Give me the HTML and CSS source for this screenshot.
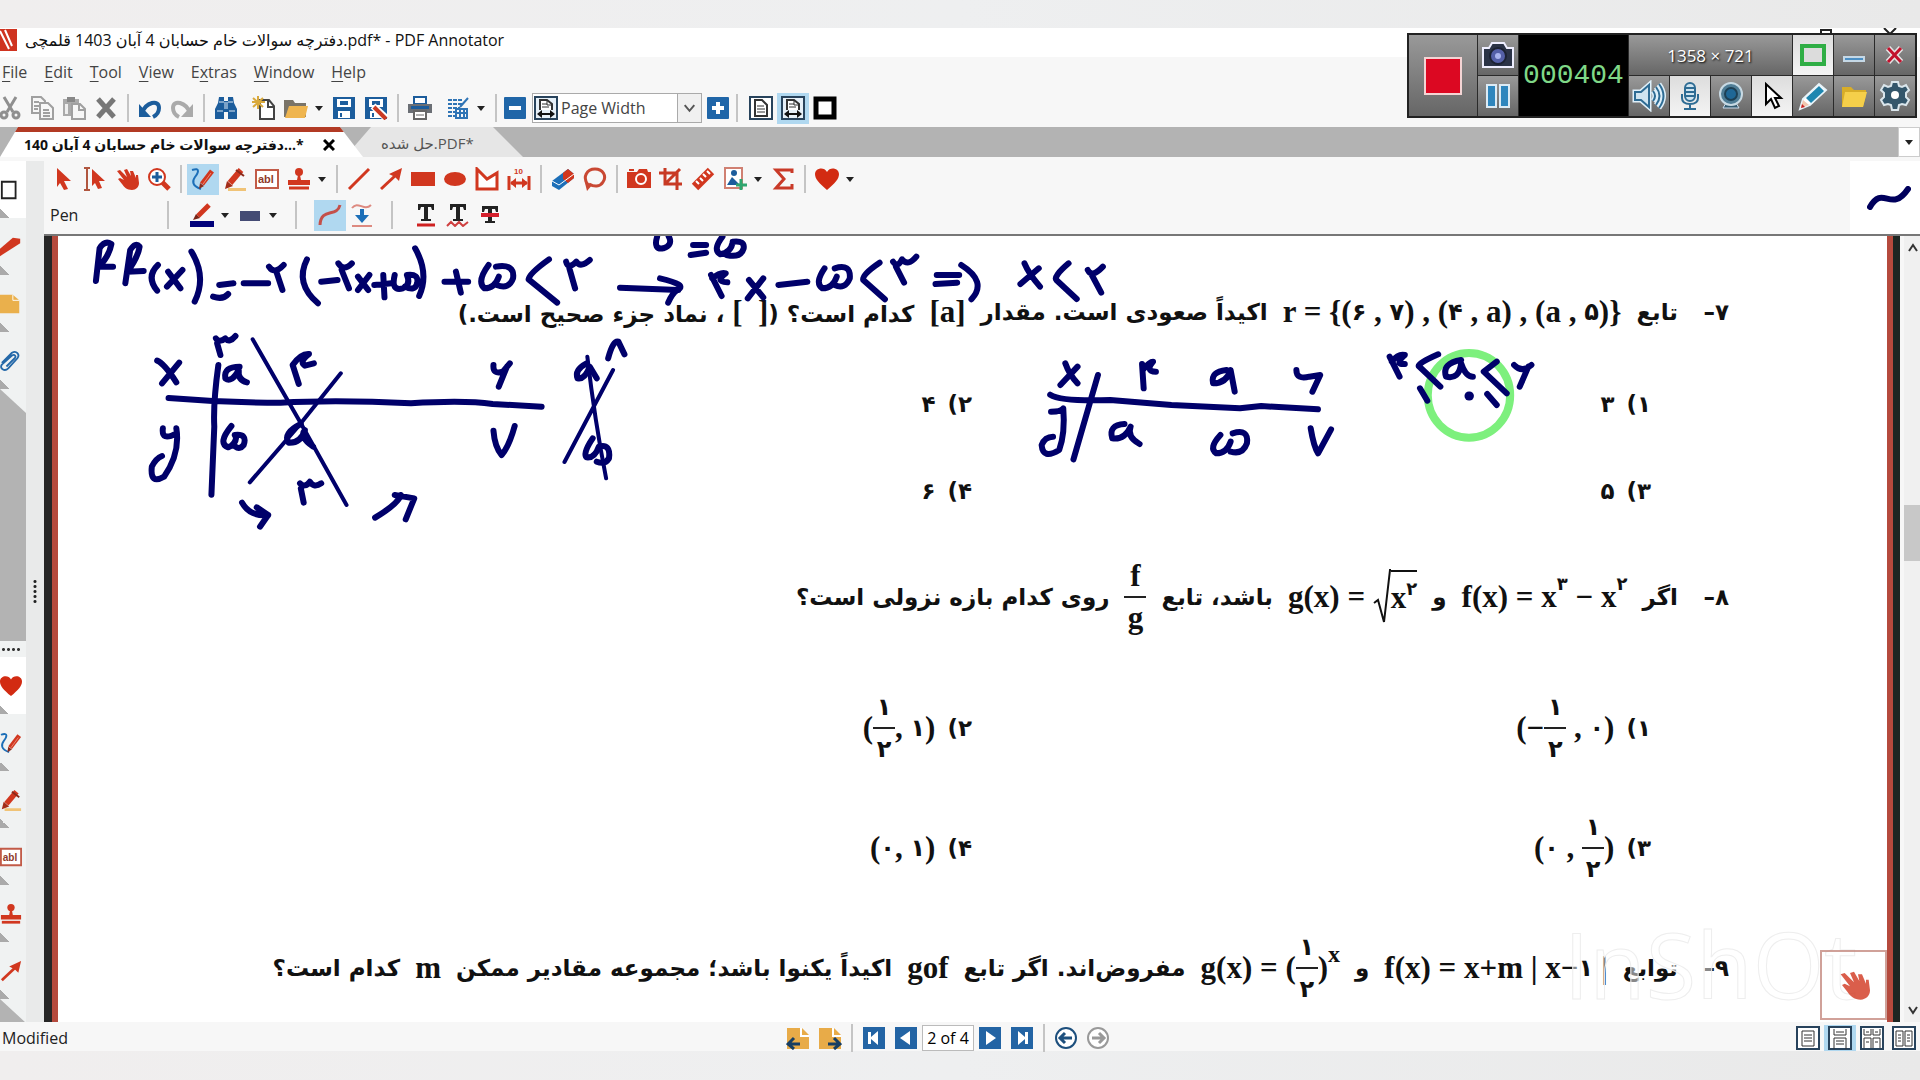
FILE: index.html
```html
<!DOCTYPE html>
<html lang="en">
<head>
    <meta charset="UTF-8">
    <meta name="viewport" content="width=device-width, initial-scale=1.0">
    <title>PDF Annotator</title>
    <link rel="stylesheet" href="styles.css">
</head>
<body>

    <!-- Icon sprite -->
    <svg class="sprite" aria-hidden="true">
        <symbol id="cut" viewBox="0 0 24 24"><g fill="none" stroke="#8f8f8f" stroke-width="3"><path d="M6 1l9 15M18 1L9 16"/><circle cx="6" cy="19" r="3"/><circle cx="18" cy="19" r="3"/></g></symbol>
        <symbol id="copy" viewBox="0 0 24 24"><g fill="#f7f7f7" stroke="#a0a0a0" stroke-width="2"><path d="M2 1h9l4 4v12H2z"/><path d="M10 7h8l5 5v11H10z"/><path d="M4 6h5M4 10h5M4 13h4M13 14h6M13 17h7M13 20h7"/></g></symbol>
        <symbol id="paste" viewBox="0 0 24 24"><path d="M1 3h16v17H1z" fill="#aaa"/><path d="M5 1h8v5H5z" fill="#888"/><path d="M3 8h3v10H3z" fill="#eee"/><path d="M10 8h8l5 5v10H10z" fill="#f7f7f7" stroke="#a0a0a0" stroke-width="2"/><path d="M17 8v6h6" fill="none" stroke="#a0a0a0" stroke-width="2"/></symbol>
        <symbol id="delete" viewBox="0 0 24 24"><path d="M4 3l16 18M20 3L4 21" stroke="#777" stroke-width="5"/></symbol>
        <symbol id="undo" viewBox="0 0 24 24"><path d="M4 17C8 6 21 3 21 12c0 4-2 7-6 9" fill="none" stroke="#1c5d9c" stroke-width="4"/><path d="M1 8v13h12z" fill="#1c5d9c"/></symbol>
        <symbol id="redo" viewBox="0 0 24 24"><path d="M20 17C16 6 3 3 3 12c0 4 2 7 6 9" fill="none" stroke="#aaa" stroke-width="4"/><path d="M23 8v13H11z" fill="#aaa"/></symbol>
        <symbol id="find" viewBox="0 0 24 24"><path d="M5 1h5v4h4V1h5l1 6 3 6v10h-9v-7h-4v7H1V13l3-6z" fill="#1c5d9c"/><path d="M11 6v7M13 6v7M3 15h6M15 15h6M5 6h5M14 6h5" stroke="#dbe9f5"/></symbol>
        <symbol id="new" viewBox="0 0 24 24"><path d="M8 4h9l5 6v13H8z" fill="#fff" stroke="#444" stroke-width="2"/><path d="M16 4v7h6" fill="none" stroke="#444" stroke-width="2"/><path d="M6 0v13M0 6h13M1 2l10 9M11 2L1 11" stroke="#d9a93c" stroke-width="2"/></symbol>
        <symbol id="open" viewBox="0 0 24 24"><path d="M0 4h9l2 3h11v14H0z" fill="#7a7468"/><path d="M5 10h19l-3 12H1z" fill="#efb54f"/></symbol>
        <symbol id="save" viewBox="0 0 24 24"><path d="M1 1h22v22H1z" fill="#1c5d9c"/><path d="M5 3h14v8H5zM6 15h12v7H6z" fill="#fff"/><path d="M8 6h8M8 8h8M9 17v4" stroke="#1c5d9c" stroke-width="2"/></symbol>
        <symbol id="saveas" viewBox="0 0 24 24"><use href="#save"/><path d="M9 10l13 12" stroke="#fff" stroke-width="7"/><path d="M10 11l12 12" stroke="#c93a24" stroke-width="4"/></symbol>
        <symbol id="print" viewBox="0 0 24 24"><path d="M6 1h12v7H6z" fill="#fff" stroke="#1c5d9c" stroke-width="2"/><path d="M0 8h24v9H0z" fill="#6b6f75"/><path d="M3 10h18v3H3z" fill="#1c5d9c"/><path d="M6 15h12v8H6z" fill="#fff" stroke="#666" stroke-width="2"/><path d="M8 19h8" stroke="#666"/></symbol>
        <symbol id="sheet" viewBox="0 0 24 24"><path d="M2 4h15M2 8h15M2 12h12M2 16h8M2 20h8" stroke="#2f74b5" stroke-width="2" stroke-dasharray="4 1"/><path d="M10 13h11v9H10zM10 17h11M14 13v9M18 13v9M14 11l8-9" fill="none" stroke="#2f74b5" stroke-width="2"/></symbol>
        <symbol id="minus" viewBox="0 0 24 24"><rect x="1" y="1" width="22" height="22" rx="1" fill="#2066a8"/><path d="M6 12h12" stroke="#fff" stroke-width="4"/></symbol>
        <symbol id="plus" viewBox="0 0 24 24"><rect x="1" y="1" width="22" height="22" rx="1" fill="#2066a8"/><path d="M6 12h12M12 6v12" stroke="#fff" stroke-width="4"/></symbol>
        <symbol id="fitpage" viewBox="0 0 24 24"><path d="M1 1h22v22H1z" fill="#fff" stroke="#28435c" stroke-width="2"/><path d="M6 4h7l5 5v11H6z" fill="#fff" stroke="#333" stroke-width="2"/><path d="M8 10h7M8 13h8M8 16h8" stroke="#333"/></symbol>
        <symbol id="fitwidth" viewBox="0 0 24 24"><path d="M1 1h22v22H1z" fill="#e6f0f8" stroke="#28435c" stroke-width="2"/><path d="M6 14V4h7l5 4v6" fill="#fff" stroke="#333" stroke-width="2"/><path d="M8 8h5M8 11h7M13 4v5h5" fill="none" stroke="#333"/><path d="M6 18h12" stroke="#111" stroke-width="2"/><path d="M3 18l5-4v8zM21 18l-5-4v8z" fill="#111"/></symbol>
        <symbol id="fullscreen" viewBox="0 0 24 24"><path d="M3 3h18v18H3z" fill="#fff" stroke="#000" stroke-width="5"/></symbol>

        <symbol id="pointer" viewBox="0 0 24 24"><path d="M6 1l14 13h-7l4 8-4 1-4-7-3 4z" fill="#d1371f"/></symbol>
        <symbol id="textselect" viewBox="0 0 24 24"><path d="M1 1h6M1 23h6M4 1v22" stroke="#b0563f" stroke-width="2"/><path d="M9 2l13 12h-6l3 7-4 1-3-6-3 3z" fill="#d1371f"/></symbol>
        <symbol id="hand" viewBox="0 0 24 24"><path d="M2 4l3-1 7 7-3-7 3-1 4 7-1-5 3 0 3 7 0-3h2l1 8c0 4-3 7-7 7-5 0-8-3-10-6l-4-5 2-1 4 2z" fill="#d1371f"/></symbol>
        <symbol id="magnify" viewBox="0 0 24 24"><path d="M15 15l7 7" stroke="#d1371f" stroke-width="5"/><circle cx="10" cy="10" r="8" fill="#fff" stroke="#d1371f" stroke-width="2"/><path d="M5 10h10M10 5v10" stroke="#1c5d9c" stroke-width="3"/></symbol>
        <symbol id="pen" viewBox="0 0 24 24"><path d="M1 3c9-3 6 3 3 7s-3 9 6 12" fill="none" stroke="#1c6fb8" stroke-width="2"/><path d="M11 17L21 4" stroke="#d1371f" stroke-width="5"/><path d="M8 22l1-6 4 3z" fill="#8b2a1b"/><path d="M12 17l8-11" stroke="#e98a78"/></symbol>
        <symbol id="marker" viewBox="0 0 24 24"><path d="M5 21h18v3H5z" fill="#f0c377"/><path d="M7 16L18 3" stroke="#d1371f" stroke-width="6"/><path d="M2 22l2-8 6 5z" fill="#a32c18"/><path d="M13 3l8 6" stroke="#8b2a1b" stroke-width="2"/></symbol>
        <symbol id="textbox" viewBox="0 0 24 24"><path d="M1 3h22v18H1z" fill="#fff" stroke="#c25b48" stroke-width="2"/><text x="3" y="16" class="abl">abl</text></symbol>
        <symbol id="stamp" viewBox="0 0 24 24"><circle cx="12" cy="5" r="4" fill="#d1371f"/><path d="M11 8h2l1 5h9v5H1v-5h9z" fill="#d1371f"/><path d="M2 21h20" stroke="#d1371f" stroke-width="3"/></symbol>
        <symbol id="line" viewBox="0 0 24 24"><path d="M2 22L22 2" stroke="#d1371f" stroke-width="3"/></symbol>
        <symbol id="arrow" viewBox="0 0 24 24"><path d="M2 22L17 8" stroke="#d1371f" stroke-width="3"/><path d="M23 1l-3 13-4-4-6-3z" fill="#d1371f"/></symbol>
        <symbol id="rect" viewBox="0 0 24 24"><path d="M0 5h24v14H0z" fill="#d1371f"/></symbol>
        <symbol id="ellipse" viewBox="0 0 24 24"><ellipse cx="12" cy="12" rx="11" ry="7" fill="#d1371f"/></symbol>
        <symbol id="polygon" viewBox="0 0 24 24"><path d="M2 2l10 10L22 6v16H2z" fill="#fff" stroke="#d1371f" stroke-width="3"/></symbol>
        <symbol id="measure" viewBox="0 0 24 24"><text x="7" y="7" class="ten">10</text><path d="M2 9v14M22 9v14M4 16h16" stroke="#d1371f" stroke-width="3"/><path d="M3 16l6-5v10zM21 16l-6-5v10z" fill="#d1371f"/></symbol>
        <symbol id="eraser" viewBox="0 0 24 24"><path d="M1 14L17 2l6 5v4L8 23l-7-4z" fill="#1c6fb8"/><path d="M12 6l5-4 6 5v4l-6 5-5-4z" fill="#d1371f"/><path d="M1 14l7 4 15-11" fill="none" stroke="#fff"/></symbol>
        <symbol id="lasso" viewBox="0 0 24 24"><path d="M5 18C-1 10 4 2 12 2s12 7 8 13c-3 5-9 5-14 2" fill="none" stroke="#c94833" stroke-width="3"/><path d="M2 16l8 1-6 7z" fill="#c94833"/></symbol>
        <symbol id="camera" viewBox="0 0 24 24"><path d="M0 5h10l2-3h8l1 3h3v16H0z" fill="#d1371f"/><circle cx="14" cy="12" r="5" fill="#d1371f" stroke="#fff" stroke-width="2"/><path d="M2 3h5" stroke="#d1371f" stroke-width="2"/></symbol>
        <symbol id="crop" viewBox="0 0 24 24"><path d="M6 1v16h17M0 6h18v17M6 17L21 2" fill="none" stroke="#c83a24" stroke-width="3"/></symbol>
        <symbol id="ruler" viewBox="0 0 24 24"><path d="M4 20L20 4" stroke="#d1371f" stroke-width="9"/><path d="M5 14l3 3M9 11l3 3M12 7l3 3M16 4l3 3" stroke="#fff" stroke-width="2"/></symbol>
        <symbol id="image" viewBox="0 0 24 24"><path d="M2 1h17v20H2z" fill="#fff" stroke="#d08072" stroke-width="2"/><circle cx="11" cy="6" r="3" fill="#1c5d9c"/><path d="M4 18l5-8 8 8z" fill="#1c5d9c"/><path d="M13 18h11M18 12v11" stroke="#2ea66f" stroke-width="3"/></symbol>
        <symbol id="sigma" viewBox="0 0 24 24"><path d="M21 6V3H5l8 9-8 9h16v-4" fill="none" stroke="#c93a28" stroke-width="3"/></symbol>
        <symbol id="heart" viewBox="0 0 24 24"><path d="M12 23C4 16 0 12 0 7c0-6 9-8 12-2 3-6 12-4 12 2 0 5-4 9-12 16z" fill="#d22b12"/></symbol>
        <symbol id="caret" viewBox="0 0 8 24"><path d="M0 10h8l-4 5z" fill="#222"/></symbol>
        <symbol id="pencolor" viewBox="0 0 24 24"><path d="M0 18h24v6H0z" fill="#00007a"/><path d="M8 13L19 2" stroke="#d1371f" stroke-width="5"/><path d="M3 17l3-6 4 4z" fill="#7a2316"/></symbol>
        <symbol id="width" viewBox="0 0 24 24"><path d="M2 8h20v10H2z" fill="#444b74"/></symbol>
        <symbol id="smooth" viewBox="0 0 24 24"><path d="M2 22c1-18 17-7 20-20" fill="none" stroke="#c4504a" stroke-width="3"/></symbol>
        <symbol id="pressure" viewBox="0 0 24 24"><path d="M2 5c6-8 12 4 19-3M2 23h20" fill="none" stroke="#dd8a80" stroke-width="2"/><path d="M10 6h4v6h5l-7 8-7-8h5z" fill="#1c6fb8"/></symbol>
        <symbol id="underline" viewBox="0 0 24 24"><path d="M4 1h16v6h-2l-1-3h-3v12h3v2H7v-2h3V4H7L6 7H4z" fill="#222"/><path d="M3 22h18" stroke="#cf2121" stroke-width="3"/></symbol>
        <symbol id="squiggly" viewBox="0 0 24 24"><path d="M4 1h16v6h-2l-1-3h-3v12h3v2H7v-2h3V4H7L6 7H4z" fill="#222"/><path d="M1 23l4-4 4 4 4-4 4 4 5-4" fill="none" stroke="#cf4040" stroke-width="2"/></symbol>
        <symbol id="strike" viewBox="0 0 24 24"><path d="M4 3h16v6h-2l-1-3h-3v12h3v2H7v-2h3V6H7L6 9H4z" fill="#222"/><path d="M3 12h18" stroke="#d41f2c" stroke-width="4"/></symbol>

        <symbol id="bookmark" viewBox="0 0 24 24"><path d="M0 14L14 2l8 1v5L0 22z" fill="#d1371f"/></symbol>
        <symbol id="note" viewBox="0 0 24 24"><path d="M0 2h14l7 6v14H0z" fill="#eab04c"/><path d="M14 2v6h7" fill="none" stroke="#fff"/></symbol>
        <symbol id="clip" viewBox="0 0 24 24"><path d="M2 14L13 3c5-3 9 2 6 6L9 20c-4 4-10 0-7-4L13 6c3-2 5 1 3 3l-9 9" fill="none" stroke="#2468a8" stroke-width="2"/></symbol>
        <symbol id="pageicon" viewBox="0 0 24 24"><path d="M2 3h15v18H2z" fill="#fff" stroke="#222" stroke-width="2"/></symbol>

        <symbol id="pageprev" viewBox="0 0 24 24"><path d="M1 2h15l7 7v14H1z" fill="#e8ab48"/><path d="M15 2v8h8" fill="none" stroke="#fff" stroke-width="2"/><path d="M3 18h11M8 12l-6 6 6 5" fill="none" stroke="#173e63" stroke-width="3"/></symbol>
        <symbol id="pagenext" viewBox="0 0 24 24"><path d="M1 2h15l7 7v14H1z" fill="#e8ab48"/><path d="M15 2v8h8" fill="none" stroke="#fff" stroke-width="2"/><path d="M10 18h11M16 12l6 6-6 5" fill="none" stroke="#173e63" stroke-width="3"/></symbol>
        <symbol id="first" viewBox="0 0 24 24"><path d="M1 1h22v22H1z" fill="#2364a4"/><path d="M6 6h3v5l7-6v14l-7-6v5H6z" fill="#fff"/></symbol>
        <symbol id="prev" viewBox="0 0 24 24"><path d="M1 1h22v22H1z" fill="#2364a4"/><path d="M6 12l10-7v14z" fill="#fff"/></symbol>
        <symbol id="next" viewBox="0 0 24 24"><path d="M1 1h22v22H1z" fill="#2364a4"/><path d="M18 12L8 5v14z" fill="#fff"/></symbol>
        <symbol id="last" viewBox="0 0 24 24"><path d="M1 1h22v22H1z" fill="#2364a4"/><path d="M18 6h-3v5L8 5v14l7-6v5h3z" fill="#fff"/></symbol>
        <symbol id="back" viewBox="0 0 24 24"><circle cx="12" cy="12" r="10" fill="#fff" stroke="#1d4f7d" stroke-width="2"/><path d="M6 12h12M11 7l-5 5 5 5" fill="none" stroke="#1d4f7d" stroke-width="3"/></symbol>
        <symbol id="forward" viewBox="0 0 24 24"><circle cx="12" cy="12" r="10" fill="#fff" stroke="#999" stroke-width="2"/><path d="M6 12h12M13 7l5 5-5 5" fill="none" stroke="#999" stroke-width="3"/></symbol>
        <symbol id="single" viewBox="0 0 24 24"><path d="M1 1h22v22H1z" fill="#fff" stroke="#28435c" stroke-width="2"/><path d="M6 5h12v15H6zM8 9h8M8 12h8M8 15h8" fill="none" stroke="#333"/></symbol>
        <symbol id="continuous" viewBox="0 0 24 24"><path d="M1 1h22v22H1z" fill="#fff" stroke="#28435c" stroke-width="2"/><path d="M6 3v6h12V3M6 23V12h12v11M8 6h8M8 15h8M8 18h8" fill="none" stroke="#333"/></symbol>
        <symbol id="twocont" viewBox="0 0 24 24"><path d="M1 1h22v22H1z" fill="#fff" stroke="#28435c" stroke-width="2"/><path d="M4 3v6h7V3M13 3v6h7V3M4 22V12h7v10M13 22V12h7v10M6 6h3M15 6h3M6 16h3M15 16h3" fill="none" stroke="#333"/></symbol>
        <symbol id="twopage" viewBox="0 0 24 24"><path d="M1 1h22v22H1z" fill="#fff" stroke="#28435c" stroke-width="2"/><path d="M4 5h7v15H4zM13 5h7v15h-7zM6 9h3M6 12h3M6 15h3M15 9h3M15 12h3M15 15h3" fill="none" stroke="#333"/></symbol>

        <symbol id="rec-camera" viewBox="0 0 36 32"><path d="M3 9h6l3-5h12l3 5h6v19H3z" fill="#2b3347" stroke="#eef" stroke-width="2"/><circle cx="18" cy="17" r="8" fill="#5560a8" stroke="#1c2233" stroke-width="2"/><circle cx="18" cy="17" r="3" fill="#aab4ee"/></symbol>
        <symbol id="rec-pause" viewBox="0 0 36 32"><path d="M7 5h9v22H7zM20 5h9v22h-9z" fill="#2f86bd" stroke="#dcebf5" stroke-width="2"/></symbol>
        <symbol id="rec-sound" viewBox="0 0 36 32"><g stroke="#dff0fa" stroke-width="5" fill="none"><path d="M4 12h6l8-7v22l-8-7H4z"/><path d="M22 11q4 5 0 10M25 7q7 9 0 18M28 4q9 12 0 24"/></g><g stroke="#2e6c94" stroke-width="2" fill="none"><path d="M4 12h6l8-7v22l-8-7H4z" fill="#cfe4f0"/><path d="M22 11q4 5 0 10M25 7q7 9 0 18M28 4q9 12 0 24"/></g></symbol>
        <symbol id="rec-mic" viewBox="0 0 36 32"><rect x="13" y="3" width="10" height="18" rx="5" fill="#cfe4f0" stroke="#2e6c94" stroke-width="2"/><path d="M13 8h10M13 12h10M13 16h10M10 14v4q0 6 8 6t8-6v-4M18 24v4M12 29h12" fill="none" stroke="#2e6c94" stroke-width="2"/></symbol>
        <symbol id="rec-webcam" viewBox="0 0 36 32"><path d="M10 28h16l-3-5H13z" fill="#335b70" stroke="#cde"/><circle cx="18" cy="14" r="11" fill="#4f7d96" stroke="#c8dae4" stroke-width="2"/><circle cx="18" cy="14" r="6" fill="#1f6796" stroke="#1d4055" stroke-width="2"/></symbol>
        <symbol id="rec-cursor" viewBox="0 0 36 32"><path d="M12 4v20l5-5 4 9 4-2-4-8h6z" fill="#fff" stroke="#000" stroke-width="2"/></symbol>
        <symbol id="rec-pencil" viewBox="0 0 36 32"><path d="M5 29l3-10L24 4l7 6-16 15z" fill="#fff" stroke="#e8f4fa" stroke-width="2"/><path d="M11 18L24 6l5 5-13 12z" fill="#1e86b0"/><path d="M6 28l2-8 6 5z" fill="#f1c8b0"/><path d="M6 28l1-4 3 3z" fill="#c22"/></symbol>
        <symbol id="rec-folder" viewBox="0 0 36 32"><path d="M6 7h9l3 3h12v5l-3 12H6z" fill="#d8ad28"/><path d="M9 12h22l-4 15H6z" fill="#f5cf4a"/></symbol>
        <symbol id="rec-gear" viewBox="0 0 36 32"><path d="M15 2h6l1 4 3 1 4-2 3 5-3 3v4l3 3-3 5-4-1-3 1-1 5h-6l-1-5-3-1-4 1-3-5 3-3v-4l-3-3 3-5 4 2 3-1z" fill="#34566b" stroke="#dbe6ec" stroke-width="2"/><circle cx="18" cy="15" r="4" fill="#fff"/></symbol>
        <symbol id="rec-region" viewBox="0 0 36 32"><path d="M7 7h22v18H7z" fill="#dcdcdc" stroke="#2fae45" stroke-width="4"/></symbol>
        <symbol id="rec-min" viewBox="0 0 36 32"><path d="M8 18h20v4H8z" fill="#4c8fc4" stroke="#c5d8e6" stroke-width="2"/></symbol>
        <symbol id="rec-close" viewBox="0 0 36 32"><path d="M11 9l13 14M24 9L11 23" stroke="#e4e4e4" stroke-width="6"/><path d="M11 9l13 14M24 9L11 23" stroke="#c2122d" stroke-width="3"/></symbol>
    </svg>

    <main class="app">
        <!-- Title bar -->
        <header class="titlebar">
            <svg class="logo" viewBox="0 0 17 22"><path d="M0 0h17v22H0z" fill="#cf3320"/><path d="M0 2l9 18M5 1l7 16" stroke="#fff" stroke-width="2"/></svg>
            <h1 dir="ltr"><bdi dir="rtl">دفترچه سوالات خام حسابان 4 آبان 1403 قلمچی</bdi>.pdf* - PDF Annotator</h1>
            <svg class="winbuttons" viewBox="0 0 100 12"><path d="M23 10V2h10v8M86 0l12 12M98 0L86 12" fill="none" stroke="#222" stroke-width="2"/></svg>
        </header>

        <nav class="menubar">
            <button><u>F</u>ile</button>
            <button><u>E</u>dit</button>
            <button><u>T</u>ool</button>
            <button><u>V</u>iew</button>
            <button>E<u>x</u>tras</button>
            <button><u>W</u>indow</button>
            <button><u>H</u>elp</button>
        </nav>

        <!-- Main toolbar -->
        <div class="toolbar main-tools">
            <button aria-label="Cut"><svg><use href="#cut"/></svg></button>
            <button aria-label="Copy"><svg><use href="#copy"/></svg></button>
            <button aria-label="Paste"><svg><use href="#paste"/></svg></button>
            <button aria-label="Delete"><svg><use href="#delete"/></svg></button>
            <i class="sep"></i>
            <button aria-label="Undo"><svg><use href="#undo"/></svg></button>
            <button aria-label="Redo"><svg><use href="#redo"/></svg></button>
            <i class="sep"></i>
            <button aria-label="Find"><svg><use href="#find"/></svg></button>
            <i class="space"></i>
            <button aria-label="New"><svg><use href="#new"/></svg></button>
            <button aria-label="Open"><svg><use href="#open"/></svg></button>
            <button class="drop" aria-label="Recent files"><svg><use href="#caret"/></svg></button>
            <button aria-label="Save"><svg><use href="#save"/></svg></button>
            <button aria-label="Save as"><svg><use href="#saveas"/></svg></button>
            <i class="sep"></i>
            <button aria-label="Print"><svg><use href="#print"/></svg></button>
            <i class="space"></i>
            <button aria-label="Layout"><svg><use href="#sheet"/></svg></button>
            <button class="drop" aria-label="Layout options"><svg><use href="#caret"/></svg></button>
            <i class="sep"></i>
            <button class="slim" aria-label="Zoom out"><svg><use href="#minus"/></svg></button>
            <div class="zoom">
                <svg class="zoom-icon"><use href="#fitwidth"/></svg>
                <select aria-label="Zoom">
                    <option>Page Width</option>
                    <option>Full Page</option>
                </select>
                <svg class="zoom-arrow" viewBox="0 0 24 28"><path d="M7 11l5 6 5-6" fill="none" stroke="#555" stroke-width="2"/></svg>
            </div>
            <button class="slim" aria-label="Zoom in"><svg><use href="#plus"/></svg></button>
            <i class="sep"></i>
            <i class="gap"></i>
            <button aria-label="Full page"><svg><use href="#fitpage"/></svg></button>
            <button class="on" aria-label="Page width"><svg><use href="#fitwidth"/></svg></button>
            <button aria-label="Full screen"><svg><use href="#fullscreen"/></svg></button>
        </div>

        <!-- Document tabs -->
        <div class="tabs">
            <div class="tab current">
                <a href="#"><bdi dir="ltr"><bdi dir="rtl">دفترچه سوالات خام حسابان 4 آبان 140</bdi>...*</bdi></a>
                <button aria-label="Close tab"><svg viewBox="0 0 12 12"><path d="M1 1l10 10M11 1L1 11" stroke="#000" stroke-width="3"/></svg></button>
            </div>
            <div class="tab">
                <a href="#"><bdi dir="ltr"><bdi dir="rtl">حل شده</bdi>.PDF*</bdi></a>
            </div>
            <button class="tablist" aria-label="Tab list"><svg><use href="#caret"/></svg></button>
        </div>

        <div class="workspace">
            <aside class="sidebar">
                <button class="front" aria-label="Pages"><svg><use href="#pageicon"/></svg></button>
                <button aria-label="Bookmarks"><svg><use href="#bookmark"/></svg></button>
                <button aria-label="Notes"><svg><use href="#note"/></svg></button>
                <button aria-label="Attachments"><svg><use href="#clip"/></svg></button>
                <div class="filler"></div>
                <div class="grip"></div>
                <button class="front" aria-label="Favorites"><svg><use href="#heart"/></svg></button>
                <button aria-label="Pen tools"><svg><use href="#pen"/></svg></button>
                <button aria-label="Marker tools"><svg><use href="#marker"/></svg></button>
                <button aria-label="Text tools"><svg><use href="#textbox"/></svg></button>
                <button aria-label="Stamp tools"><svg><use href="#stamp"/></svg></button>
                <button aria-label="Arrow tools"><svg><use href="#arrow"/></svg></button>
                <div class="filler end"></div>
            </aside>
            <div class="splitter"><i></i></div>

            <section class="editor">
                <div class="annotate">
                    <div class="rows">
                        <div class="toolbar">
                            <button aria-label="Select"><svg><use href="#pointer"/></svg></button>
                            <button aria-label="Select text"><svg><use href="#textselect"/></svg></button>
                            <button aria-label="Pan"><svg><use href="#hand"/></svg></button>
                            <button aria-label="Zoom tool"><svg><use href="#magnify"/></svg></button>
                            <i class="sep"></i>
                            <button class="on" aria-label="Pen"><svg><use href="#pen"/></svg></button>
                            <button aria-label="Marker"><svg><use href="#marker"/></svg></button>
                            <button aria-label="Text"><svg><use href="#textbox"/></svg></button>
                            <button aria-label="Stamp"><svg><use href="#stamp"/></svg></button>
                            <button class="drop" aria-label="Stamps"><svg><use href="#caret"/></svg></button>
                            <i class="sep"></i>
                            <button aria-label="Line"><svg><use href="#line"/></svg></button>
                            <button aria-label="Arrow"><svg><use href="#arrow"/></svg></button>
                            <button aria-label="Rectangle"><svg><use href="#rect"/></svg></button>
                            <button aria-label="Ellipse"><svg><use href="#ellipse"/></svg></button>
                            <button aria-label="Polygon"><svg><use href="#polygon"/></svg></button>
                            <button aria-label="Measure"><svg><use href="#measure"/></svg></button>
                            <i class="sep"></i>
                            <button aria-label="Eraser"><svg><use href="#eraser"/></svg></button>
                            <button aria-label="Lasso"><svg><use href="#lasso"/></svg></button>
                            <i class="sep"></i>
                            <button aria-label="Snapshot"><svg><use href="#camera"/></svg></button>
                            <button aria-label="Crop"><svg><use href="#crop"/></svg></button>
                            <button aria-label="Ruler"><svg><use href="#ruler"/></svg></button>
                            <button aria-label="Insert image"><svg><use href="#image"/></svg></button>
                            <button class="drop" aria-label="Images"><svg><use href="#caret"/></svg></button>
                            <button aria-label="Formula"><svg><use href="#sigma"/></svg></button>
                            <i class="sep"></i>
                            <button aria-label="Favorites"><svg><use href="#heart"/></svg></button>
                            <button class="drop" aria-label="Favorite list"><svg><use href="#caret"/></svg></button>
                        </div>
                        <div class="toolbar pen-options">
                            <span class="tool-name">Pen</span>
                            <i class="sep"></i>
                            <button aria-label="Color"><svg><use href="#pencolor"/></svg></button>
                            <button class="drop" aria-label="Colors"><svg><use href="#caret"/></svg></button>
                            <button aria-label="Width"><svg><use href="#width"/></svg></button>
                            <button class="drop" aria-label="Widths"><svg><use href="#caret"/></svg></button>
                            <i class="sep"></i>
                            <button class="on" aria-label="Smoothing"><svg><use href="#smooth"/></svg></button>
                            <button aria-label="Pressure"><svg><use href="#pressure"/></svg></button>
                            <i class="sep"></i>
                            <button aria-label="Underline"><svg><use href="#underline"/></svg></button>
                            <button aria-label="Squiggly"><svg><use href="#squiggly"/></svg></button>
                            <button aria-label="Strikeout"><svg><use href="#strike"/></svg></button>
                        </div>
                    </div>
                    <div class="preview">
                        <svg viewBox="0 0 44 24"><path d="M3 21C16-2 24 28 41 3" fill="none" stroke="#00005c" stroke-width="6" stroke-linecap="round"/></svg>
                    </div>
                </div>

                <div class="viewer">
                    <article class="page" lang="fa" dir="rtl">
                        <p class="question">
                            <span class="number">۷–</span>
                            <span>تابع</span>
                            <span class="math" dir="ltr">r = {(<b>۶</b> , <b>۷</b>) , (<b>۴</b> , a) , (a , <b>۵</b>)}</span>
                            <span>اکیداً صعودی است. مقدار</span>
                            <span class="math" dir="ltr">[a]</span>
                            <span>کدام است؟ (<span class="math" dir="ltr"> [ &nbsp;]</span>، نماد جزء صحیح است.)</span>
                        </p>
                        <ol class="answers">
                            <li><span>۱)</span><span>۳</span></li>
                            <li><span>۲)</span><span>۴</span></li>
                            <li><span>۳)</span><span>۵</span></li>
                            <li><span>۴)</span><span>۶</span></li>
                        </ol>

                        <p class="question tall">
                            <span class="number">۸–</span>
                            <span>اگر</span>
                            <span class="math" dir="ltr">f(x) = x<sup>۳</sup> − x<sup>۲</sup></span>
                            <span>و</span>
                            <span class="math" dir="ltr">g(x) = <svg class="radical" viewBox="0 0 18 56"><path d="M1 34l4-3 6 22L17 1h2" fill="none" stroke="#111" stroke-width="2"/></svg><span class="root">x<sup>۲</sup></span></span>
                            <span>باشد، تابع</span>
                            <span class="math frac" dir="ltr"><span>f</span><span>g</span></span>
                            <span>روی کدام بازه نزولی است؟</span>
                        </p>
                        <ol class="answers tall">
                            <li><span>۱)</span><span class="math" dir="ltr">(−<span class="frac"><b>۱</b><b>۲</b></span> , <b>۰</b>)</span></li>
                            <li><span>۲)</span><span class="math" dir="ltr">(<span class="frac"><b>۱</b><b>۲</b></span>, <b>۱</b>)</span></li>
                            <li><span>۳)</span><span class="math" dir="ltr">(<b>۰</b> , <span class="frac"><b>۱</b><b>۲</b></span>)</span></li>
                            <li><span>۴)</span><span class="math" dir="ltr">(<b>۰</b>, <b>۱</b>)</span></li>
                        </ol>

                        <p class="question last">
                            <span class="number">۹–</span>
                            <span>توابع</span>
                            <span class="math" dir="ltr">f(x) = x+m | x−<b>۱</b> |</span>
                            <span>و</span>
                            <span class="math" dir="ltr">g(x) = (<span class="frac"><b>۱</b><b>۲</b></span>)<sup class="latin">x</sup></span>
                            <span>مفروض‌اند. اگر تابع</span>
                            <span class="math" dir="ltr">gof</span>
                            <span>اکیداً یکنوا باشد؛ مجموعه مقادیر ممکن</span>
                            <span class="math" dir="ltr">m</span>
                            <span>کدام است؟</span>
                        </p>

                        <!-- Pen strokes on the page -->
                        <svg class="ink left" viewBox="0 0 1568 960" preserveAspectRatio="none">
                            <path d="M88 183L97 85Q110 60 126 72Q120 110 95 140L130 140M160 190L172 90Q185 65 195 80Q190 115 165 155L205 153"/>
                            <path d="M240 135Q210 170 238 212M265 155L295 205M300 150L262 200M322 95Q360 170 330 245M390 195L425 190M375 230Q400 240 412 222M450 190L510 190"/>
                            <path d="M512 140Q525 165 548 135M530 155L545 210M605 118Q575 190 632 250M640 185L680 180M682 130Q695 155 715 130M690 150L708 205M730 170L755 210M758 165L730 210M770 195L812 190M792 165L795 232"/>
                            <path d="M820 165Q810 215 840 205Q860 195 850 165M850 165Q880 160 875 190Q870 215 845 200M870 85Q905 160 880 228M942 185L1000 185M970 155L982 218"/>
                            <path d="M1050 135Q1020 185 1040 205Q1065 205 1075 170M1068 140Q1115 130 1110 175Q1100 210 1070 195M1198 118Q1150 160 1148 178Q1160 190 1218 248M1240 125Q1245 150 1265 125Q1275 145 1298 120M1248 145L1262 205"/>
                            <path d="M1372 203L1515 210M1470 175Q1540 195 1512 210Q1500 220 1490 248"/>
                            <path d="M382 355Q390 370 405 355Q415 370 430 348M385 370L393 405M440 440Q400 440 405 475Q420 490 438 450Q435 480 458 487M238 422Q255 430 285 487M292 428L250 490"/>
                            <path d="M388 435Q375 550 378 620L371 824M266 534Q400 548 540 548Q680 538 860 550Q990 540 1060 552L1180 560"/>
                            <path class="thin" d="M472 358L590 610L702 855M688 460L590 610L465 787M1355 450L1236 726M1292 410Q1310 600 1338 775"/>
                            <path d="M585 492L570 435Q590 400 610 402Q585 425 600 437L622 430M1062 435Q1060 465 1085 455L1102 430M1095 440L1075 500"/>
                            <path d="M252 625Q248 665 285 640M285 625Q295 700 255 770Q220 795 225 740Q235 715 250 708M420 618Q385 670 412 682Q430 675 432 650M428 645Q460 640 450 675Q440 690 430 680M590 612Q545 640 560 668Q590 670 600 630Q585 650 620 680M1062 632Q1065 680 1082 705Q1100 680 1114 618"/>
                            <path d="M1290 430Q1260 450 1268 475Q1285 480 1298 440L1315 475M1343 415Q1355 360 1368 365L1383 403M1305 655Q1280 700 1290 712Q1310 715 1320 680Q1350 670 1345 715Q1335 735 1315 725"/>
                            <path d="M588 790Q600 805 612 785Q622 805 640 790M590 805L597 848M446 848Q465 890 510 885M482 862L510 885L490 920M772 893Q830 850 835 825M820 825L868 835L847 898"/>
                        </svg>
                        <svg class="ink middle" viewBox="0 0 1568 960" preserveAspectRatio="none">
                            <path d="M140 50Q130 90 155 85Q180 75 168 48M228 75L260 75M222 105L260 98M300 50Q275 90 295 103Q320 98 325 68M325 65Q355 60 352 85Q345 115 310 105"/>
                            <path d="M272 165L298 228M275 175Q295 155 308 160Q280 185 312 187M365 180L400 232M400 175L362 235M437 195L508 185"/>
                            <path d="M550 145Q525 190 545 205Q570 205 580 170M575 145Q615 130 612 175Q600 210 575 195M685 128Q640 165 645 180L698 238M718 125Q730 145 740 118Q755 140 775 110M725 140L745 188"/>
                            <path d="M825 165L880 165M822 192L875 188M885 135Q950 185 910 238M1040 130Q1050 160 1078 200M1075 145L1030 192M1148 130Q1110 170 1118 180L1168 237M1195 150Q1205 175 1232 140M1205 165L1228 218"/>
                            <path d="M1140 430Q1150 465 1170 490M1170 440L1128 495M1220 465L1160 718M1103 524Q1130 545 1250 540L1400 555L1568 565L1620 558L1759 568"/>
                            <path d="M1328 432L1332 505M1330 450Q1345 425 1355 425Q1335 455 1362 455M1535 450Q1495 455 1502 490Q1535 490 1545 450L1555 515"/>
                            <path d="M1105 575Q1130 575 1135 565Q1140 640 1125 690Q1085 720 1082 675Q1090 650 1110 650M1285 612Q1245 615 1255 655Q1285 660 1300 620Q1290 650 1322 672M1520 645Q1490 685 1510 700Q1535 700 1545 665M1550 640Q1590 625 1585 670Q1575 705 1545 695"/>
                        </svg>
                        <svg class="ink right" viewBox="0 0 1568 960" preserveAspectRatio="none">
                            <ellipse class="halo" cx="528" cy="526" rx="95" ry="127"/>
                            <path d="M130 450Q130 480 160 470L185 465L167 515M163 625Q170 680 180 700L210 628M345 410L368 470M350 425Q365 400 380 405Q355 435 380 432"/>
                            <path d="M457 403Q410 430 412 438L462 500M510 420Q465 430 475 470Q505 480 510 430Q520 470 537 470M592 425L562 455L615 520M632 435Q650 460 672 435M665 440L645 500M415 505L432 542M570 522L592 555"/>
                            <path class="dot" d="M528 528h1"/>
                        </svg>

                        <span class="watermark" dir="ltr">InShOt</span>
                        <span class="stampbox"><svg><use href="#hand"/></svg></span>
                    </article>
                    <div class="scrollbar">
                        <svg viewBox="0 0 16 24"><path d="M5 15l4-6 4 6" fill="none" stroke="#333" stroke-width="2"/></svg>
                        <i></i>
                        <svg viewBox="0 0 16 24"><path d="M5 9l4 6 4-6" fill="none" stroke="#333" stroke-width="2"/></svg>
                    </div>
                </div>
            </section>
        </div>

        <!-- Status bar -->
        <footer class="statusbar">
            <span class="state">Modified</span>
            <div class="pager">
                <button aria-label="Previous marked page"><svg><use href="#pageprev"/></svg></button>
                <button aria-label="Next marked page"><svg><use href="#pagenext"/></svg></button>
                <i class="sep"></i>
                <button aria-label="First page"><svg><use href="#first"/></svg></button>
                <button aria-label="Previous page"><svg><use href="#prev"/></svg></button>
                <input type="text" value="2 of 4" aria-label="Page">
                <button aria-label="Next page"><svg><use href="#next"/></svg></button>
                <button aria-label="Last page"><svg><use href="#last"/></svg></button>
                <i class="sep"></i>
                <button aria-label="Back"><svg><use href="#back"/></svg></button>
                <button aria-label="Forward"><svg><use href="#forward"/></svg></button>
            </div>
            <div class="views">
                <button aria-label="Single page"><svg><use href="#single"/></svg></button>
                <button class="on" aria-label="Continuous"><svg><use href="#continuous"/></svg></button>
                <button aria-label="Two pages continuous"><svg><use href="#twocont"/></svg></button>
                <button aria-label="Two pages"><svg><use href="#twopage"/></svg></button>
            </div>
        </footer>
    </main>

    <!-- Screen recorder panel -->
    <div class="recorder">
        <button class="stop" aria-label="Stop"><i></i></button>
        <button aria-label="Screenshot"><svg><use href="#rec-camera"/></svg></button>
        <output class="clock">000404</output>
        <span class="size">1358 × 721</span>
        <button class="lit" aria-label="Region"><svg><use href="#rec-region"/></svg></button>
        <button aria-label="Minimize"><svg><use href="#rec-min"/></svg></button>
        <button aria-label="Close"><svg><use href="#rec-close"/></svg></button>
        <button aria-label="Pause"><svg><use href="#rec-pause"/></svg></button>
        <button aria-label="Sound"><svg><use href="#rec-sound"/></svg></button>
        <button class="lit" aria-label="Microphone"><svg><use href="#rec-mic"/></svg></button>
        <button aria-label="Webcam"><svg><use href="#rec-webcam"/></svg></button>
        <button class="lit" aria-label="Cursor"><svg><use href="#rec-cursor"/></svg></button>
        <button aria-label="Draw"><svg><use href="#rec-pencil"/></svg></button>
        <button aria-label="Folder"><svg><use href="#rec-folder"/></svg></button>
        <button aria-label="Settings"><svg><use href="#rec-gear"/></svg></button>
    </div>

</body>
</html>
```
FILE: styles.css
```css
* {
    box-sizing: border-box;
}

body {
    display: flex;
    flex-direction: column;
    height: 100vh;
    margin: 0;
    padding: 28px 0 29px;
    overflow: hidden;
    background: linear-gradient(to right, #f0eeee, #eeeff0 50%, #e9e9e9);
    font-family: "Open Sans", "DejaVu Sans", sans-serif;
    font-size: 16px;
    color: #222;
}

button {
    display: flex;
    align-items: center;
    justify-content: center;
    padding: 0;
    border: 0;
    background: none;
    font: inherit;
    color: inherit;
}

svg {
    display: block;
    flex: none;
}

.sprite {
    display: none;
}

.abl {
    font: bold 11px "Liberation Sans", sans-serif;
    fill: #8f3a2c;
}
.ten {
    font: bold 8px "Liberation Sans", sans-serif;
    fill: #d1371f;
}

.app {
    display: flex;
    flex-direction: column;
    flex: 1;
    min-height: 0;
    background-color: #f7f7f7;
}

/* Title and menu */
.titlebar {
    display: flex;
    align-items: center;
    height: 29px;
    padding-bottom: 6px;
    background-color: #fff;
}
.titlebar h1 {
    flex: 1;
    margin: 0 0 0 8px;
    font-size: 16px;
    font-weight: normal;
    line-height: 24px;
    color: #111;
}
.logo {
    width: 17px;
    height: 22px;
}
.winbuttons {
    align-self: flex-start;
    width: 100px;
    height: 12px;
    margin-right: 22px;
}
.menubar {
    display: flex;
    gap: 17px;
    height: 33px;
    padding: 0 2px 4px;
    color: #444;
}
.menubar u {
    text-underline-offset: 3px;
}

/* Toolbars */
.toolbar {
    display: flex;
    align-items: center;
    height: 36px;
}
.toolbar button {
    width: 32px;
    height: 31px;
}
.toolbar button svg {
    width: 24px;
    height: 24px;
}
.toolbar .slim {
    width: 26px;
}
.toolbar .drop {
    width: 16px;
    justify-content: flex-start;
    padding-left: 3px;
}
.toolbar .drop svg {
    width: 8px;
}
.toolbar .on,
.views .on {
    background-color: #b0d8f0;
}
.sep {
    width: 2px;
    height: 28px;
    margin: 0 5px;
    background-color: #c4c4c4;
}
.space {
    width: 6px;
}
.gap {
    width: 2px;
}
.main-tools {
    margin: 0 0 1px -6px;
}
.zoom {
    position: relative;
    width: 170px;
    height: 30px;
    margin: 0 3px 0 4px;
}
.zoom select {
    width: 100%;
    height: 100%;
    padding: 0 28px;
    border: 1px solid #aaa;
    border-radius: 0;
    appearance: none;
    background-color: #fff;
    font: inherit;
    color: #444;
}
.zoom-icon {
    position: absolute;
    top: 3px;
    left: 2px;
    width: 24px;
    height: 24px;
}
.zoom-arrow {
    position: absolute;
    top: 1px;
    right: 1px;
    width: 24px;
    height: 28px;
    border-left: 1px solid #aaa;
    background-color: #f0f0f0;
    pointer-events: none;
}

/* Document tabs */
.tabs {
    display: flex;
    height: 30px;
    background-color: #b3b3b3;
}
.tab {
    display: flex;
    align-items: center;
    width: 178px;
    margin-left: -18px;
    padding: 2px 0 0 36px;
    clip-path: polygon(0 100%, 26px 0, 148px 0, 100% 100%);
    background-color: #e6e6e6;
    font-size: 15px;
}
.tab a {
    color: #555;
    text-decoration: none;
    white-space: nowrap;
}
.tab.current {
    position: relative;
    z-index: 1;
    justify-content: space-between;
    width: 363px;
    margin: 0;
    padding: 0 28px 0 24px;
    border-top: 5px solid #b23a24;
    clip-path: polygon(0 100%, 18px 0, 340px 0, 100% 100%);
    background-color: #fff;
    font-weight: bold;
    font-size: 14px;
}
.tab.current a {
    color: #111;
}
.tab.current svg {
    width: 12px;
    height: 12px;
}
.tablist {
    width: 22px;
    margin-left: auto;
    border: 1px solid #ccc;
    background-color: #fff;
}
.tablist svg {
    width: 8px;
    height: 24px;
}

.workspace {
    display: flex;
    flex: 1;
    min-height: 0;
    padding-top: 4px;
}

/* Left sidebar */
.sidebar {
    display: flex;
    flex-direction: column;
    width: 26px;
    background-color: #f0f2f2;
}
.sidebar button {
    justify-content: flex-start;
    height: 57px;
    background: linear-gradient(to top right, #aaa 50%, transparent 50%) left bottom / 9px 9px no-repeat;
}
.sidebar .front {
    background-color: #fff;
}
.sidebar svg {
    width: 22px;
    height: 24px;
}
.filler {
    flex: 1;
    clip-path: polygon(0 0, 100% 24px, 100% 100%, 0 100%);
    background-color: #b3b3b3;
}
.filler.end {
    flex: none;
    height: 23px;
}
.grip {
    height: 16px;
    margin: 0 4px 0 1px;
    background: radial-gradient(circle, #333 1px, transparent 2px) left center / 5px 5px repeat-x;
}
.splitter {
    display: flex;
    align-items: center;
    justify-content: center;
    width: 18px;
    background-color: #e9eaea;
}
.splitter i {
    width: 4px;
    height: 25px;
    background: radial-gradient(circle, #222 1px, transparent 2px) center / 4px 5px repeat-y;
}

/* Annotation tools */
.editor {
    display: flex;
    flex-direction: column;
    flex: 1;
    min-width: 0;
}
.annotate {
    display: flex;
    height: 73px;
}
.rows {
    flex: 1;
    padding-left: 3px;
}
.pen-options {
    padding-left: 3px;
}
.pen-options .sep {
    margin: 0 17px 0 13px;
}
.tool-name {
    width: 104px;
}
.preview {
    display: flex;
    align-items: center;
    justify-content: center;
    width: 70px;
    padding-left: 8px;
    background-color: #fff;
}
.preview svg {
    width: 44px;
    height: 24px;
}

/* Page viewer */
.viewer {
    display: flex;
    flex: 1;
    min-height: 0;
    border-top: 2px solid #777;
}
.page {
    position: relative;
    flex: 1;
    padding: 30px 158px 0 0;
    border-right: 6px solid #b54a3d;
    border-left: 6px solid #b54a3d;
    box-shadow: -8px 0 #262626, 7px 0 #1d2622;
    margin: 0 11px 0 8px;
    overflow: hidden;
    background-color: #fff;
    font: bold 23px "DejaVu Sans", sans-serif;
    color: #111;
}
.question {
    display: flex;
    align-items: center;
    gap: 15px;
    height: 92px;
    margin: 0;
    white-space: nowrap;
}
.question.tall {
    height: 126px;
}
.question.last {
    height: 120px;
}
.number {
    width: 36px;
}
.math {
    display: inline-flex;
    align-items: center;
    font: bold 31px "Liberation Serif", "DejaVu Sans", serif;
    white-space: pre;
}
.math b {
    font: bold 24px "DejaVu Sans", sans-serif;
}
.math sup {
    align-self: flex-start;
    margin-top: -6px;
    font: bold 18px "DejaVu Sans", sans-serif;
}
.math .latin {
    margin-top: 14px;
    font: bold 24px "Liberation Serif", serif;
}
.frac {
    display: inline-flex;
    flex-direction: column;
    align-items: center;
}
.math .frac > *,
.math.frac > * {
    width: 22px;
    line-height: 40px;
    text-align: center;
}
.frac > :first-child {
    border-bottom: 2px solid #222;
}
.radical {
    width: 18px;
    height: 56px;
}
.root {
    display: inline-flex;
    align-items: center;
    height: 54px;
    border-top: 2px solid #111;
}
.root sup {
    margin-top: 6px;
}
.answers {
    display: grid;
    grid-template-columns: 679px 679px;
    grid-auto-rows: 87px;
    margin: 2px 0 0;
    padding: 0 78px 0 0;
    list-style: none;
}
.answers.tall {
    grid-auto-rows: 120px;
    margin-top: 8px;
}
.answers li {
    display: flex;
    align-items: center;
    gap: 12px;
}

/* Pen strokes */
.ink {
    position: absolute;
    top: -16px;
    width: 640px;
    height: 320px;
    overflow: visible;
    fill: none;
    stroke: #00006a;
    stroke-width: 6px;
    stroke-linecap: round;
    stroke-linejoin: round;
}
.ink * {
    vector-effect: non-scaling-stroke;
}
.ink.left {
    left: 2px;
}
.ink.middle {
    left: 542px;
}
.ink.right {
    left: 1182px;
    width: 680px;
}
.ink .thin {
    stroke-width: 4px;
}
.ink .dot {
    stroke-width: 9px;
}
.ink .halo {
    stroke: #7df07d;
    stroke-width: 8px;
}

.watermark {
    position: absolute;
    right: 30px;
    bottom: 12px;
    font: 92px/92px "Open Sans", sans-serif;
    color: rgba(255, 255, 255, 0.5);
    -webkit-text-stroke: 1px #eee;
}
.stampbox {
    position: absolute;
    right: 0;
    bottom: 2px;
    display: flex;
    align-items: center;
    justify-content: center;
    width: 67px;
    height: 70px;
    border: 2px solid #c58a80;
    opacity: 0.8;
}
.stampbox svg {
    width: 32px;
    height: 32px;
}

.scrollbar {
    display: flex;
    flex-direction: column;
    width: 16px;
    background-color: #f0f0f0;
}
.scrollbar svg {
    width: 16px;
    height: 24px;
}
.scrollbar i {
    height: 56px;
    margin: 245px 0 auto;
    background-color: #c8c8c8;
}

/* Status bar */
.statusbar {
    display: flex;
    align-items: center;
    height: 29px;
    padding: 3px 0 0 2px;
    font-size: 16px;
}
.state {
    flex: 0 0 calc(50% - 179px);
}
.pager,
.views {
    display: flex;
    align-items: center;
}
.statusbar svg {
    width: 24px;
    height: 24px;
}
.statusbar button {
    width: 32px;
    height: 26px;
}
.pager input {
    width: 52px;
    height: 26px;
    padding: 0;
    border: 1px solid #bbb;
    background-color: #fff;
    font: inherit;
    text-align: center;
}
.views {
    flex: 1;
    justify-content: flex-end;
}

/* Recorder */
.recorder {
    position: absolute;
    top: 33px;
    right: 3px;
    display: grid;
    grid-template-columns: 68px 40px 109px repeat(7, 40px);
    grid-template-rows: 40px 40px;
    gap: 1px;
    border: 2px solid #222;
    background-color: #2a2a2a;
}
.recorder button,
.recorder .size {
    background: linear-gradient(#999, #666);
}
.recorder .lit {
    background: linear-gradient(#ddd, #f4f4f4);
}
.recorder svg {
    width: 36px;
    height: 32px;
}
.recorder .stop {
    grid-row: span 2;
}
.stop i {
    width: 38px;
    height: 38px;
    border: 2px solid #f4d4d4;
    background-color: #dc0822;
}
.recorder .clock {
    display: flex;
    grid-row: span 2;
    align-items: center;
    justify-content: center;
    background-color: #000;
    font: 28px "Liberation Mono", monospace;
    color: #7fd887;
}
.recorder .size {
    display: flex;
    grid-column: span 4;
    align-items: center;
    justify-content: center;
    font-size: 17px;
    color: #fff;
    text-shadow: 1px 1px 2px #000;
}
```
